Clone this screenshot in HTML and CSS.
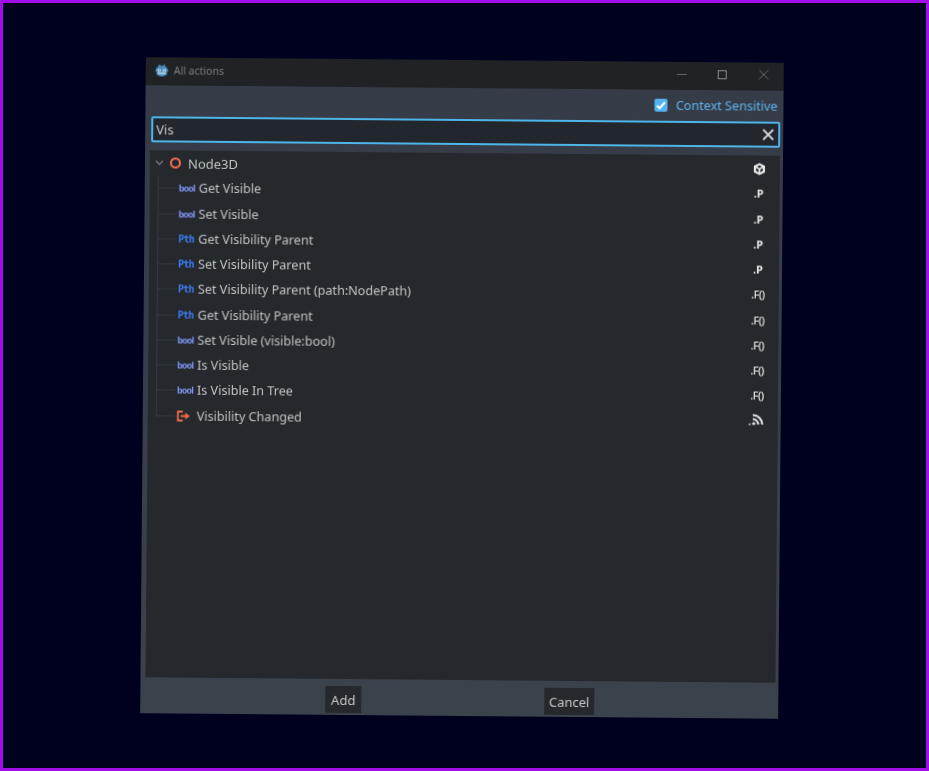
FILE: index.html
```html
<!DOCTYPE html>
<html lang="en">
<head>
    <meta charset="UTF-8">
    <meta name="viewport" content="width=device-width, initial-scale=1.0">
    <title>All actions</title>
    <link rel="stylesheet" href="styles.css">
</head>
<body>
    <div class="desktop">
        <div class="window">
            <div class="titlebar">
                <svg class="logo" width="14" height="14" viewBox="0 0 16 16">
                    <path fill="#478cbf" d="M2 5 L4 4 L4 2 L6 1.5 L6.6 3 L9.4 3 L10 1.5 L12 2 L12 4 L14 5 L15.5 9 L14 10 L14 13 L10 15 L6 15 L2 13 L2 10 L.5 9 Z"/>
                    <circle cx="5.2" cy="8" r="1.8" fill="#fff"/>
                    <circle cx="10.8" cy="8" r="1.8" fill="#fff"/>
                    <circle cx="5.4" cy="8" r=".9" fill="#414042"/>
                    <circle cx="10.6" cy="8" r=".9" fill="#414042"/>
                    <path fill="none" stroke="#fff" stroke-width="1.1" d="M3.5 11.5 H12.5"/>
                </svg>
                <span class="title">All actions</span>
                <div class="win-buttons">
                    <svg width="12" height="12" viewBox="0 0 12 12"><path d="M1 5.5H11" stroke="#66696c" fill="none"/></svg>
                    <svg width="12" height="12" viewBox="0 0 12 12"><rect x="1.5" y="1.5" width="8" height="8" stroke="#8a8c8f" fill="none"/></svg>
                    <svg width="12" height="12" viewBox="0 0 12 12"><path d="M1.5 .5L10.5 9.5M10.5 .5L1.5 9.5" stroke="#66696c" fill="none"/></svg>
                </div>
            </div>

            <div class="context-row">
                <span class="checkbox">
                    <svg width="13" height="13" viewBox="0 0 13 13"><path d="M2.5 7L5.2 9.5L10.5 3.5" stroke="#fff" stroke-width="2" fill="none"/></svg>
                </span>
                <span class="context-label">Context Sensitive</span>
            </div>

            <div class="search">
                <span class="search-text">Vis</span>
                <svg class="clear" width="12" height="12" viewBox="0 0 12 12"><path d="M1 1L11 11M11 1L1 11" stroke="#d4d5d6" stroke-width="1.8" fill="none"/></svg>
            </div>

            <div class="tree">
                <div class="row root">
                    <svg class="chevron" width="9" height="9" viewBox="0 0 9 9"><path d="M1 2.5L4.5 6L8 2.5" stroke="#75787b" stroke-width="1.4" fill="none"/></svg>
                    <span class="node-circle"></span>
                    <span class="name">Node3D</span>
                    <span class="kind cube">
                        <svg width="13" height="13" viewBox="0 0 14 14"><path fill="#e8e9ea" d="M7 .5L13 3.6V10.4L7 13.5L1 10.4V3.6Z"/><path fill="#26292c" d="M7 3L9.6 4.4L7 5.8L4.4 4.4ZM3.4 6L6 7.4V10.4L3.4 9ZM10.6 6V9L8 10.4V7.4Z"/></svg>
                    </span>
                </div>

                <div class="row"><span class="branch"></span><span class="type bool">bool</span><span class="name">Get Visible</span><span class="kind prop">.P</span></div>
                <div class="row"><span class="branch"></span><span class="type bool">bool</span><span class="name">Set Visible</span><span class="kind prop">.P</span></div>
                <div class="row"><span class="branch"></span><span class="type pth">Pth</span><span class="name">Get Visibility Parent</span><span class="kind prop">.P</span></div>
                <div class="row"><span class="branch"></span><span class="type pth">Pth</span><span class="name">Set Visibility Parent</span><span class="kind prop">.P</span></div>
                <div class="row"><span class="branch"></span><span class="type pth">Pth</span><span class="name">Set Visibility Parent (path:NodePath)</span><span class="kind func">.F()</span></div>
                <div class="row"><span class="branch"></span><span class="type pth">Pth</span><span class="name">Get Visibility Parent</span><span class="kind func">.F()</span></div>
                <div class="row"><span class="branch"></span><span class="type bool">bool</span><span class="name">Set Visible (visible:bool)</span><span class="kind func">.F()</span></div>
                <div class="row"><span class="branch"></span><span class="type bool">bool</span><span class="name">Is Visible</span><span class="kind func">.F()</span></div>
                <div class="row"><span class="branch"></span><span class="type bool">bool</span><span class="name">Is Visible In Tree</span><span class="kind func">.F()</span></div>
                <div class="row last">
                    <span class="branch"></span>
                    <span class="type">
                        <svg width="14" height="11" viewBox="0 0 14 11"><path d="M6 1H1.2V10H6" stroke="#f0694a" stroke-width="1.8" fill="none"/><path fill="#f0694a" d="M4 4.4H8.5V2L13 5.5L8.5 9V6.6H4Z"/></svg>
                    </span>
                    <span class="name">Visibility Changed</span>
                    <span class="kind signal">
                        <svg width="16" height="13" viewBox="0 0 16 13"><rect x="0" y="11" width="1.6" height="1.6" fill="#d8d9da"/><circle cx="5" cy="11" r="1.6" fill="#e6e7e8"/><path d="M4 6.5A5.5 5.5 0 0 1 9.5 12M4 2.5A9.5 9.5 0 0 1 13.5 12" stroke="#e6e7e8" stroke-width="2" fill="none"/></svg>
                    </span>
                </div>
            </div>

            <div class="footer">
                <button class="btn add">Add</button>
                <button class="btn cancel">Cancel</button>
            </div>
        </div>
    </div>
</body>
</html>
```

FILE: styles.css
```css
html, body {
    margin: 0;
    padding: 0;
}
body {
    font-family: "Noto Sans", sans-serif;
    background: #00001f;
}
.desktop {
    box-sizing: border-box;
    width: 929px;
    height: 771px;
    border: 3px solid #a20ee8;
    padding: 57px 0 0 140px;
    overflow: hidden;
}
.window {
    width: 638px;
    height: 656px;
    display: flex;
    flex-direction: column;
    background: linear-gradient(#353b47, #3a424c);
    transform: rotate(0.5deg);
    filter: blur(0.3px);
}
.titlebar {
    height: 28px;
    display: flex;
    align-items: center;
    background: #202225;
    padding: 0 14px 2px 9px;
    box-sizing: border-box;
}
.title {
    margin-left: 5px;
    font-size: 10.5px;
    color: #7d7f82;
}
.win-buttons {
    margin-left: auto;
    display: flex;
    gap: 29px;
}
.context-row {
    height: 31px;
    display: flex;
    align-items: center;
    justify-content: flex-end;
    padding-right: 6px;
}
.checkbox {
    width: 13px;
    height: 13px;
    background: #54b2ee;
    border-radius: 2px;
    margin-right: 8px;
    display: flex;
}
.context-label {
    font-size: 12.6px;
    color: #60b4ee;
}
.search {
    box-sizing: border-box;
    height: 26px;
    margin: 0 3px 0 6px;
    border: 2px solid #4db5e8;
    border-radius: 2px;
    background: #22262d;
    display: flex;
    align-items: center;
    padding: 0 4px 0 3px;
}
.search-text {
    font-size: 13px;
    color: #c8cacc;
}
.clear {
    margin-left: auto;
}
.tree {
    flex: 1;
    margin: 8px 3px 0 5px;
    background: #25282c;
    min-height: 0;
}
.row {
    height: 25.25px;
    display: flex;
    align-items: center;
    padding-left: 8px;
    padding-right: 13px;
    font-size: 12.6px;
    color: #c2c4c6;
}
.row.root {
    padding-left: 5px;
    font-size: 13px;
}
.chevron {
    margin-right: 6px;
}
.node-circle {
    box-sizing: border-box;
    width: 11px;
    height: 11px;
    border: 2px solid #f0704f;
    border-radius: 50%;
    margin-right: 7px;
}
.branch {
    align-self: stretch;
    width: 19px;
    margin-right: 2px;
    background:
        linear-gradient(#35383d, #35383d) 0 0 / 1px 100% no-repeat,
        linear-gradient(#35383d, #35383d) 0 50% / 100% 1px no-repeat;
}
.row.last .branch {
    background:
        linear-gradient(#35383d, #35383d) 0 0 / 1px 50% no-repeat,
        linear-gradient(#35383d, #35383d) 0 50% / 100% 1px no-repeat;
}
.type {
    width: 20px;
    font-size: 9px;
    font-weight: 700;
    display: flex;
    align-items: center;
}
.type.bool {
    color: #7c93f0;
    letter-spacing: -0.9px;
}
.type.pth {
    color: #3c7cf0;
    font-size: 10px;
    letter-spacing: -0.8px;
    font-family: "DejaVu Sans Mono", monospace;
}
.kind {
    margin-left: auto;
    width: 16px;
    display: flex;
    justify-content: center;
    color: #e8e9ea;
    font-weight: 700;
    font-size: 11px;
}
.kind.func {
    letter-spacing: -0.6px;
    font-weight: 500;
}
.kind.cube {
    margin-top: 2px;
}
.kind.signal {
    margin-bottom: 3px;
}
.footer {
    height: 34px;
    display: flex;
    align-items: flex-end;
    padding: 0 0 2px 185px;
    gap: 183px;
}
.btn {
    height: 27px;
    padding: 0;
    border: 0;
    background: #25282c;
    color: #c8cacc;
    font-family: "Noto Sans", sans-serif;
    font-size: 13px;
}
.btn.add {
    width: 36px;
}
.btn.cancel {
    width: 50px;
}
```
